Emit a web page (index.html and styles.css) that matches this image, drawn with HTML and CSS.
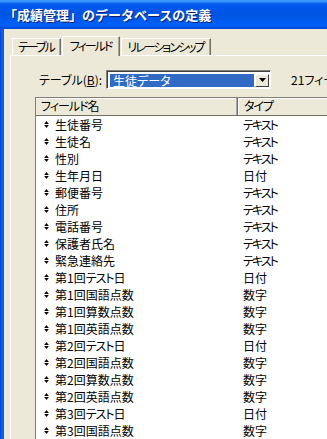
FILE: index.html
```html
<!DOCTYPE html>
<html lang="ja">
<head>
  <meta charset="UTF-8" />
  <title>「成績管理」のデータベースの定義</title>
  <link rel="stylesheet" href="styles.css">
</head>
<body>
  <div class="window">
    <!-- Title bar -->
    <div class="titlebar">「成績管理」のデータベースの定義</div>

    <div class="frame">
      <div class="edge"></div>
      <div class="dialog">
        <!-- Tabs -->
        <div class="tabs">
          <div class="tab">テーブル</div>
          <div class="tab active">フィールド</div>
          <div class="tab">リレーションシップ</div>
        </div>

        <div class="panel">
          <div class="table-row">
            <span class="label">テーブル(<u>B</u>):</span>
            <div class="combo">
              <span class="combo-value">生徒データ</span>
              <span class="combo-btn">
                <svg width="7" height="4" viewBox="0 0 7 4"><polygon points="0,0 7,0 3.5,4" fill="#000"/></svg>
              </span>
            </div>
            <span class="count">21フィールド</span>
          </div>

          <!-- Field list -->
          <div class="list">
            <div class="list-head">
              <div class="col-name">フィールド名</div>
              <div class="col-type">タイプ</div>
            </div>
            <div class="row"><span class="mark"></span><span class="col-name">生徒番号</span><span class="col-type kana">テキスト</span></div>
            <div class="row"><span class="mark"></span><span class="col-name">生徒名</span><span class="col-type kana">テキスト</span></div>
            <div class="row"><span class="mark"></span><span class="col-name">性別</span><span class="col-type kana">テキスト</span></div>
            <div class="row"><span class="mark"></span><span class="col-name">生年月日</span><span class="col-type">日付</span></div>
            <div class="row"><span class="mark"></span><span class="col-name">郵便番号</span><span class="col-type kana">テキスト</span></div>
            <div class="row"><span class="mark"></span><span class="col-name">住所</span><span class="col-type kana">テキスト</span></div>
            <div class="row"><span class="mark"></span><span class="col-name">電話番号</span><span class="col-type kana">テキスト</span></div>
            <div class="row"><span class="mark"></span><span class="col-name">保護者氏名</span><span class="col-type kana">テキスト</span></div>
            <div class="row"><span class="mark"></span><span class="col-name">緊急連絡先</span><span class="col-type kana">テキスト</span></div>
            <div class="row"><span class="mark"></span><span class="col-name">第1回<span class="kana-s">テスト</span>日</span><span class="col-type">日付</span></div>
            <div class="row"><span class="mark"></span><span class="col-name">第1回国語点数</span><span class="col-type">数字</span></div>
            <div class="row"><span class="mark"></span><span class="col-name">第1回算数点数</span><span class="col-type">数字</span></div>
            <div class="row"><span class="mark"></span><span class="col-name">第1回英語点数</span><span class="col-type">数字</span></div>
            <div class="row"><span class="mark"></span><span class="col-name">第2回<span class="kana-s">テスト</span>日</span><span class="col-type">日付</span></div>
            <div class="row"><span class="mark"></span><span class="col-name">第2回国語点数</span><span class="col-type">数字</span></div>
            <div class="row"><span class="mark"></span><span class="col-name">第2回算数点数</span><span class="col-type">数字</span></div>
            <div class="row"><span class="mark"></span><span class="col-name">第2回英語点数</span><span class="col-type">数字</span></div>
            <div class="row"><span class="mark"></span><span class="col-name">第3回<span class="kana-s">テスト</span>日</span><span class="col-type">日付</span></div>
            <div class="row"><span class="mark"></span><span class="col-name">第3回国語点数</span><span class="col-type">数字</span></div>
          </div>
        </div>
      </div>
    </div>
  </div>
</body>
</html>
```

FILE: styles.css
```css
body {
  margin: 0;
  font-family: "Noto Sans CJK JP", "Noto Sans", sans-serif;
  font-size: 12px;
  color: #000;
  background: #ece9d8;
  overflow: hidden;
}

.window {
  width: 327px;
  height: 439px;
  overflow: hidden;
}

.titlebar {
  height: 29px;
  line-height: 29px;
  padding-left: 4px;
  color: #fff;
  font-weight: bold;
  font-size: 13px;
  text-shadow: 1px 1px 0 #0a1e6e;
  white-space: nowrap;
  background: linear-gradient(to bottom, #3d95ff 0, #3d95ff 2px, #0a62f4 3px, #0058ee 6px, #0054e3 50%, #0060f8 85%, #0058ee 92%, #0044cf 100%);
}

.frame {
  display: flex;
  height: 410px;
}

.edge {
  width: 4px;
  flex: none;
  background: linear-gradient(to right, #0041c8 0, #0058ee 1px, #1665f0 3px, #0a50d8 4px);
}

.dialog {
  flex: 1;
  background: #ece9d8;
  padding: 6px 0 0 6px;
  min-width: 0;
  font-feature-settings: "palt" 1;
}

.tabs {
  display: flex;
  align-items: flex-end;
  height: 20px;
  padding-left: 2px;
}

.tab {
  height: 16px;
  line-height: 15px;
  padding: 0 6px 0 5px;
  margin-right: 1px;
  background: #ece9d8;
  border: 1px solid #fff;
  border-bottom: none;
  border-right: 1px solid #716f64;
  box-shadow: inset -1px 0 0 #aca899;
  white-space: nowrap;
  letter-spacing: -2px;
}

.tab.active {
  height: 19px;
  line-height: 17px;
  margin-bottom: -1px;
  position: relative;
  z-index: 1;
  padding: 0 8px 0 7px;
}

.panel {
  border-top: 1px solid #fff;
  border-left: 1px solid #fff;
  padding: 14px 0 0 24px;
  height: 400px;
}

.table-row {
  display: flex;
  align-items: center;
  height: 19px;
  white-space: nowrap;
}

.table-row > * {
  flex: none;
}

.label {
  margin-left: 4px;
  margin-right: 4px;
}

.combo {
  display: flex;
  align-items: center;
  width: 161px;
  height: 15px;
  padding: 1px;
  border: 1px solid;
  border-color: #7f7d74 #fff #fff #7f7d74;
  box-shadow: inset 1px 1px 0 #404040;
  background: #fff;
}

.combo-value {
  flex: 1;
  height: 13px;
  line-height: 13px;
  margin: 1px 1px 0 2px;
  padding-left: 3px;
  background: #316ac5;
  color: #fff;
}

.combo-btn {
  width: 14px;
  height: 13px;
  display: flex;
  align-items: center;
  justify-content: center;
  background: #ece9d8;
  border: 1px solid;
  border-color: #fff #404040 #404040 #fff;
  box-sizing: border-box;
  margin-top: 1px;
}

.count {
  margin-left: 20px;
}

.list {
  margin-top: 8px;
  width: 310px;
  background: #fff;
  border-left: 1px solid #7f7d74;
  border-top: 1px solid #7f7d74;
  height: 360px;
}

.list-head {
  display: flex;
  height: 17px;
  line-height: 16px;
  background: #ece9d8;
  border-bottom: 1px solid #716f64;
  box-shadow: inset 0 1px 0 #fff;
  letter-spacing: -1px;
}

.list-head .col-name {
  width: 196px;
  padding-left: 5px;
  border-right: 1px solid #716f64;
  box-shadow: inset -1px 0 0 #aca899;
}

.list-head .col-type {
  padding-left: 5px;
  border-left: 1px solid #fff;
}

.row {
  display: flex;
  align-items: center;
  height: 17px;
  white-space: nowrap;
}

.mark {
  width: 5px;
  height: 7px;
  margin: 0 6px 0 8px;
  background: linear-gradient(to bottom, transparent 3px, #fff 3px, #fff 4px, transparent 4px), #000;
  clip-path: polygon(50% 0, 100% 45%, 100% 55%, 50% 100%, 0 55%, 0 45%);
}

.row .col-name {
  width: 188px;
}

.kana {
  letter-spacing: -2px;
}

.kana-s {
  letter-spacing: -1px;
}
```
